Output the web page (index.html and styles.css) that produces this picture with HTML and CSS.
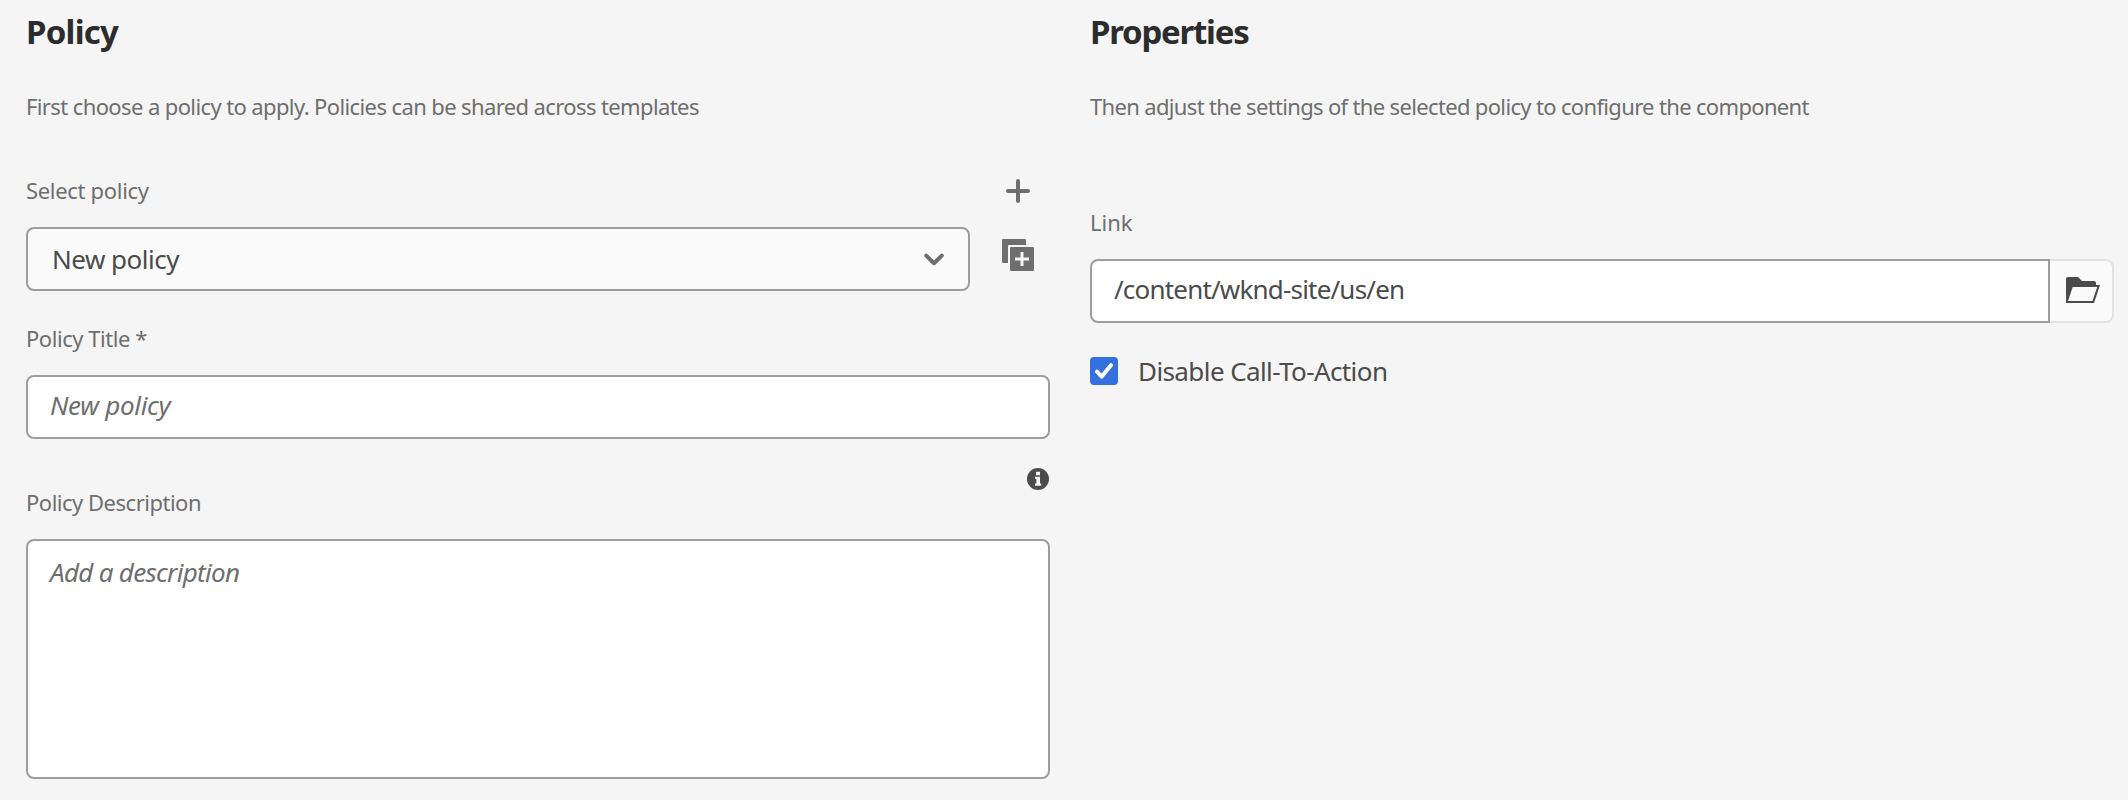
FILE: index.html
```html
<!DOCTYPE html>
<html lang="en">
<head>
<meta charset="utf-8">
<title>Policy</title>
<link rel="stylesheet" href="styles.css">
</head>
<body>
<main class="editor">
  <section class="column">
    <h2 class="title title-policy">Policy</h2>
    <p class="intro">First choose a policy to apply. Policies can be shared across templates</p>
    <div class="select-block">
      <div class="select-field">
        <label class="label label-select">Select policy</label>
        <div class="control select"><span>New policy</span>
          <svg class="chevron" width="20" height="13" viewBox="0 0 20 13"><path d="M2.200 2.600 10 10.200l7.800-7.600" fill="none" stroke="#6e6e6e" stroke-width="4" stroke-linecap="round" stroke-linejoin="round"/></svg>
        </div>
      </div>
      <div class="actions">
        <svg width="24" height="24" viewBox="0 0 24 24"><path d="M12 2v20M2 12h20" stroke="#6e6e6e" stroke-width="4" stroke-linecap="round"/></svg>
        <svg width="32" height="32" viewBox="0 0 32 32"><path fill="#6e6e6e" d="M1 0h22a1 1 0 0 1 1 1v5H7a1 1 0 0 0-1 1v17H1a1 1 0 0 1-1-1V1a1 1 0 0 1 1-1z"/><path fill="#6e6e6e" fill-rule="evenodd" d="M9 8h22a1 1 0 0 1 1 1v22a1 1 0 0 1-1 1H9a1 1 0 0 1-1-1V9a1 1 0 0 1 1-1zM18.500 13v5.500H13v3h5.500V27h3v-5.500H27v-3h-5.500V13z"/></svg>
      </div>
    </div>
    <label class="label label-title">Policy Title *</label>
    <div class="control input">New policy</div>
    <div class="info">
      <svg width="22" height="22" viewBox="0 0 22 22"><circle cx="11" cy="11" r="11" fill="#4b4b4b"/><path fill="#f5f5f5" d="M9 3.800h4v3.400H9zM8 8.800h5v6.800h1.300v2.200H8v-2.200h1.400V11H8z"/></svg>
    </div>
    <label class="label label-desc">Policy Description</label>
    <div class="control textarea">Add a description</div>
  </section>
  <section class="column">
    <h2 class="title title-properties">Properties</h2>
    <p class="intro intro-properties">Then adjust the settings of the selected policy to configure the component</p>
    <label class="label label-link">Link</label>
    <div class="path">
      <div class="control path-input">/content/wknd-site/us/en</div>
      <div class="browse">
        <svg width="34" height="26" viewBox="0 0 34 26"><path fill="#4b4b4b" fill-rule="evenodd" d="M0 2a2 2 0 0 1 2-2h10l4 4h12a2 2 0 0 1 2 2v2h4l-6 18H0zM6.700 10 2 24h24.500l4.700-14z"/></svg>
      </div>
    </div>
    <div class="check">
      <span class="box"><svg width="18" height="16" viewBox="0 0 18 16"><path d="M2 8.600 6.700 13.600 16 2.200" fill="none" stroke="#fff" stroke-width="4" stroke-linecap="round" stroke-linejoin="round"/></svg></span>
      <span class="check-label">Disable Call-To-Action</span>
    </div>
  </section>
</main>
</body>
</html>
```

FILE: styles.css
```css
* { box-sizing: border-box; }
body { margin: 0; background: #f5f5f5; font-family: "Noto Sans", sans-serif; color: #4b4b4b; }
svg { display: block; }
.editor { display: grid; grid-template-columns: 1024px 1024px; gap: 40px; padding: 0 14px 0 26px; height: 800px; overflow: hidden; white-space: nowrap; }
.title { margin: 0; padding-top: 12px; height: 86px; font-size: 33px; line-height: 40px; font-weight: 700; color: #2c2c2c; }
.title-policy { letter-spacing: -0.75px; }
.title-properties { letter-spacing: -1.25px; }
.intro { margin: 0; height: 87px; font-size: 22px; line-height: 40px; color: #6e6e6e; letter-spacing: -0.61px; }
.intro-properties { letter-spacing: -0.66px; }
.label { display: block; height: 54px; font-size: 22px; line-height: 34px; color: #6e6e6e; }
.label-select { letter-spacing: -0.31px; }
.label-title { margin-top: 30px; letter-spacing: -0.45px; }
.label-desc { letter-spacing: -0.49px; }
.label-link { margin-top: 32px; }
.control { display: flex; align-items: center; height: 64px; border: 2px solid #9d9d9d; border-radius: 8px; background: #fff; font-size: 26px; line-height: 34px; }
.select-block { display: flex; justify-content: space-between; }
.select-field { width: 944px; }
.select { justify-content: space-between; padding: 0 24px; background: #fafafa; letter-spacing: -0.5px; }
.actions { display: flex; flex-direction: column; align-items: center; gap: 36px; padding: 6px 16px 0 0; }
.input { padding: 0 22px 4px; font-style: italic; color: #6e6e6e; letter-spacing: -0.3px; }
.info { display: flex; justify-content: flex-end; margin: 29px 1px -5px 0; }
.textarea { height: 240px; align-items: flex-start; padding: 14px 22px; font-style: italic; color: #6e6e6e; letter-spacing: -0.7px; }
.path { display: flex; }
.path-input { width: 960px; padding: 0 22px 4px; border-radius: 8px 0 0 8px; letter-spacing: -0.81px; }
.browse { width: 64px; height: 64px; display: flex; align-items: center; padding: 0 0 2px 16px; border: 2px solid #e1e1e1; border-left: 0; border-radius: 0 8px 8px 0; background: #fafafa; }
.check { display: flex; gap: 20px; margin-top: 31px; font-size: 26px; line-height: 34px; }
.check-label { letter-spacing: -0.59px; }
.box { width: 28px; height: 28px; margin-top: 3px; display: grid; place-items: center; background: #3570df; border-radius: 4px; }
```
